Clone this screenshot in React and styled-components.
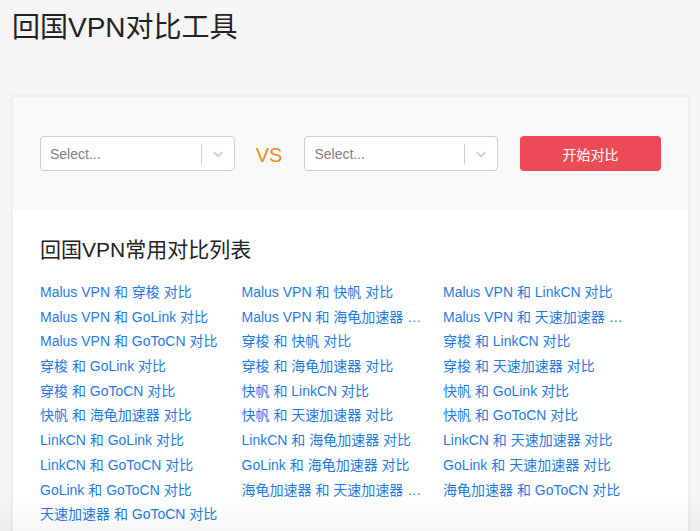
import React from "react"
import styled, { createGlobalStyle } from "styled-components"

const GlobalStyle = createGlobalStyle`
  html, body {
    margin: 0;
    padding: 0;
    background: #f5f5f5;
    overflow: hidden;
  }
  body {
    font-family: "Liberation Sans", "Noto Sans CJK SC", sans-serif;
    color: #222;
  }
`

const Page = styled.div`
  padding: 11px 11px 0 12px;
`

const Title = styled.h1`
  margin: 0;
  font-size: 28px;
  font-weight: 400;
  line-height: 34px;
  color: #222;
`

const Card = styled.main`
  margin-top: 51px;
  background: #fff;
  box-shadow: 0 0 3px rgba(0, 0, 0, 0.08);
  border: 1px solid #eeeeee;
  border-bottom: 0;
`

const Toolbar = styled.section`
  display: flex;
  align-items: center;
  gap: 21px;
  padding: 39px 27px 39px 27px;
  background: #f9f9f9;
`

const SelectBox = styled.div`
  box-sizing: border-box;
  display: flex;
  align-items: center;
  width: ${p => p.$width}px;
  height: 35px;
  background: #fff;
  border: 1px solid #cccccc;
  border-radius: 4px;
`

const Placeholder = styled.span`
  flex: 1;
  padding: 0 9px;
  font-size: 14px;
  color: #808080;
`

const Separator = styled.span`
  width: 1px;
  height: 20px;
  background: #cccccc;
`

const Indicator = styled.span`
  display: flex;
  padding: 0 8px;
  color: #cccccc;
`

const Versus = styled.span`
  font-size: 20px;
  line-height: 24px;
  padding-top: 2px;
  color: #f28a22;
  margin-right: 1px;
`

const CompareButton = styled.button`
  width: 141px;
  height: 35px;
  margin-left: 1px;
  border: 0;
  border-radius: 4px;
  background: #eb4b57;
  color: #fff;
  font-family: inherit;
  font-size: 14px;
  cursor: pointer;
`

const ListSection = styled.section`
  padding: 27px 27px 20px 27px;
`

const Heading = styled.h2`
  margin: 0 0 18px;
  font-size: 21px;
  font-weight: 400;
  line-height: 25px;
  color: #222;
`

const LinkGrid = styled.div`
  display: grid;
  grid-template-columns: repeat(3, 201.5px);
  grid-auto-rows: 24.7px;
`

const CompareLink = styled.a`
  display: block;
  padding-right: 14px;
  font-size: 14px;
  line-height: 24.7px;
  color: #1f7be2;
  text-decoration: none;
  white-space: nowrap;
  overflow: hidden;
  text-overflow: ellipsis;
`

const BottomFade = styled.div`
  position: fixed;
  left: 0;
  right: 0;
  bottom: 0;
  height: 34px;
  pointer-events: none;
  background: linear-gradient(rgba(0, 0, 0, 0), rgba(0, 0, 0, 0.035));
`

const Chevron = () => (
  <svg width="16" height="16" viewBox="0 0 20 20" fill="currentColor">
    <path d="M4.516 7.548c0.436-0.446 1.043-0.481 1.576 0l3.908 3.747 3.908-3.747c0.533-0.481 1.141-0.446 1.574 0 0.436 0.445 0.408 1.197 0 1.615-0.406 0.418-4.695 4.502-4.695 4.502-0.217 0.223-0.502 0.335-0.787 0.335s-0.57-0.112-0.789-0.335c0 0-4.287-4.084-4.695-4.502s-0.436-1.17 0-1.615z" />
  </svg>
)

const Select = ({ width }) => (
  <SelectBox $width={width}>
    <Placeholder>Select...</Placeholder>
    <Separator />
    <Indicator>
      <Chevron />
    </Indicator>
  </SelectBox>
)

const vpns = ["Malus VPN", "穿梭", "快帆", "LinkCN", "GoLink", "海龟加速器", "天速加速器", "GoToCN"]

const pairs = []
vpns.forEach((a, i) => {
  vpns.slice(i + 1).forEach(b => pairs.push([a, b]))
})

export default function App() {
  return (
    <>
      <GlobalStyle />
      <Page>
        <Title>回国VPN对比工具</Title>
        <Card>
          <Toolbar>
            <Select width={195} />
            <Versus>VS</Versus>
            <Select width={194} />
            <CompareButton>开始对比</CompareButton>
          </Toolbar>
          <ListSection>
            <Heading>回国VPN常用对比列表</Heading>
            <LinkGrid>
              {pairs.map(([a, b]) => (
                <CompareLink key={a + b} href="#">
                  {a} 和 {b} 对比
                </CompareLink>
              ))}
            </LinkGrid>
          </ListSection>
        </Card>
      </Page>
      <BottomFade />
    </>
  )
}
